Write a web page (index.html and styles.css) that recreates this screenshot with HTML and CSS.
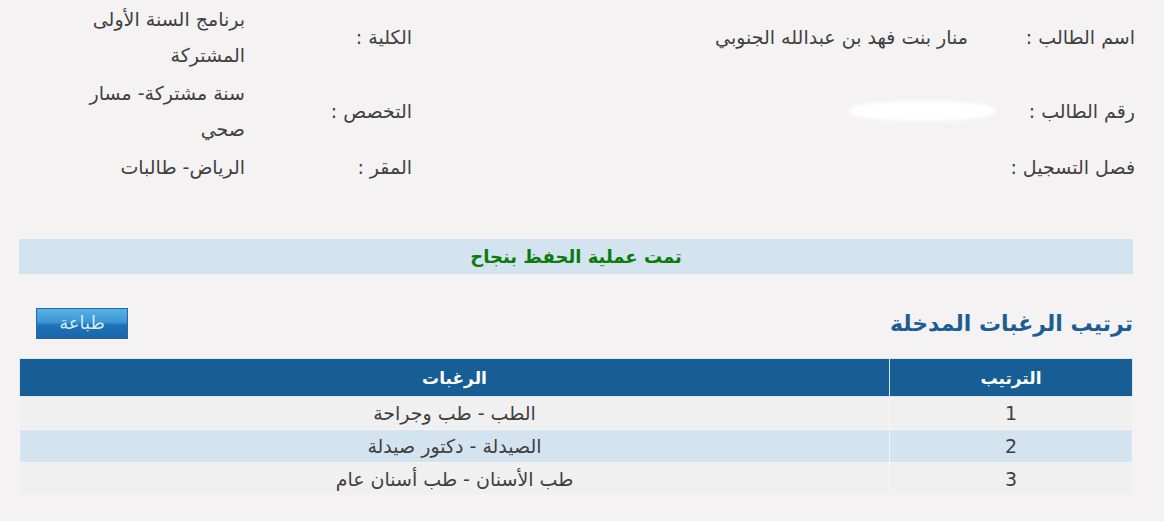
FILE: index.html
```html
<!DOCTYPE html>
<html lang="ar" dir="rtl">
<head>
<meta charset="utf-8">
<title>ترتيب الرغبات</title>
<link rel="stylesheet" href="styles.css">
</head>
<body>
<div class="page">
  <div class="info">
    <div class="lbl">اسم الطالب :</div>
    <div class="val">منار بنت فهد بن عبدالله الجنوبي</div>
    <div class="lbl">الكلية :</div>
    <div class="val wrap">برنامج السنة الأولى المشتركة</div>

    <div class="lbl">رقم الطالب :</div>
    <div class="val"><span class="redact"></span></div>
    <div class="lbl">التخصص :</div>
    <div class="val wrap">سنة مشتركة- مسار صحي</div>

    <div class="lbl">فصل التسجيل :</div>
    <div class="val"></div>
    <div class="lbl">المقر :</div>
    <div class="val wrap">الرياض- طالبات</div>
  </div>

  <div class="success">تمت عملية الحفظ بنجاح</div>

  <div class="section-head">
    <h2 class="title">ترتيب الرغبات المدخلة</h2>
    <button class="print-btn" type="button">طباعة</button>
  </div>

  <table class="wishes">
    <thead>
      <tr><th class="col-rank">الترتيب</th><th>الرغبات</th></tr>
    </thead>
    <tbody>
      <tr><td>1</td><td>الطب - طب وجراحة</td></tr>
      <tr class="alt"><td>2</td><td>الصيدلة - دكتور صيدلة</td></tr>
      <tr><td>3</td><td>طب الأسنان - طب أسنان عام</td></tr>
    </tbody>
  </table>
</div>
</body>
</html>
```

FILE: styles.css
```css
html, body {
  margin: 0;
  padding: 0;
  background: #f4f2f3;
}
body {
  font-family: "DejaVu Sans", "Noto Sans", sans-serif;
  color: #404040;
  font-size: 17px;
}
.page {
  padding: 0 31px 0 19px;
}
.info {
  display: grid;
  grid-template-columns: 167px 556px 167px 190px;
  margin-right: -2px;
  align-items: center;
  line-height: 36px;
}
.info > div {
  padding: 1px 0;
  min-height: 36px;
}
.lbl {
  text-align: right;
  font-size: 19px;
}
.val {
  text-align: right;
  font-size: 19px;
}
.redact {
  display: inline-block;
  width: 146px;
  height: 20px;
  margin-right: -27px;
  margin-top: 8px;
  background: #ffffff;
  border-radius: 50% / 40%;
  filter: blur(2px);
  vertical-align: top;
}
.success {
  margin-top: 53px;
  height: 35px;
  line-height: 35px;
  background: #d3e4f0;
  color: #0c7a0c;
  font-weight: bold;
  font-size: 18px;
  text-align: center;
}
.section-head {
  display: flex;
  align-items: center;
  justify-content: space-between;
  margin-top: 33px;
  height: 32px;
  margin-bottom: 19px;
}
.title {
  margin: 0;
  font-size: 22px;
  font-weight: bold;
  color: #1c5d94;
}
.print-btn {
  width: 92px;
  height: 31px;
  margin-left: 17px;
  border: 1px solid #2b66a0;
  background: linear-gradient(#56b2e6 0%, #3b97d4 45%, #1f73b8 55%, #1a66aa 100%);
  color: #d3e9f8;
  font-family: "DejaVu Sans", sans-serif;
  font-size: 18px;
  line-height: 1;
  padding: 0;
}
.wishes {
  width: 100%;
  border-collapse: collapse;
}
.wishes th {
  background: #175e96;
  color: #fff;
  font-weight: bold;
  font-size: 17px;
  height: 37px;
  border: 1px solid #d8e6f0;
  padding: 0;
}
.wishes th.col-rank {
  width: 242px;
}
.wishes td {
  background: #f0f0f0;
  height: 32px;
  border: 1px solid #f6f5f6;
  text-align: center;
  padding: 0;
  font-size: 19px;
}
.wishes tr.alt td {
  background: #d3e4f0;
}
```
